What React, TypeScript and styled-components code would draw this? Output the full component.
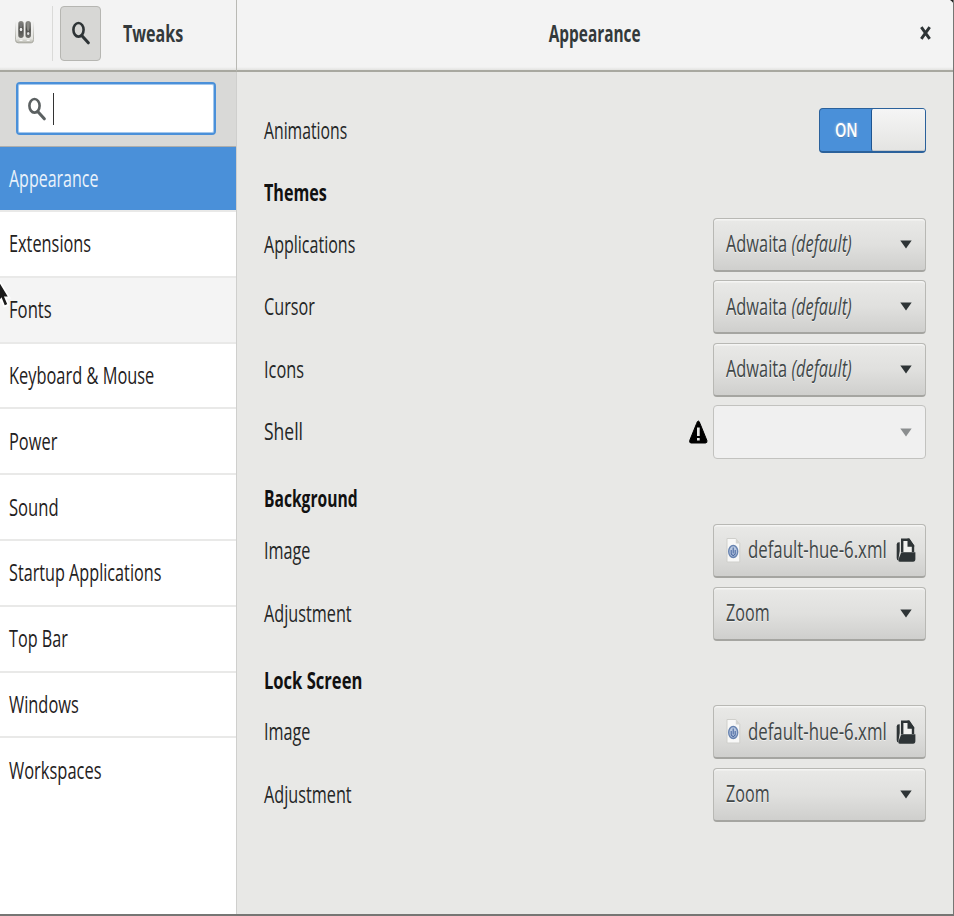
import React from 'react';
import styled, { createGlobalStyle, css } from 'styled-components';

const GlobalStyle = createGlobalStyle`
  html, body { margin: 0; padding: 0; background: #e8e8e6; }
  * { box-sizing: border-box; }
`;

const Window = styled.main`
  position: relative;
  display: grid;
  grid-template-columns: 237px 1fr;
  grid-template-rows: 72px 1fr;
  width: 954px;
  height: 916px;
  overflow: hidden;
  background: #e8e8e6;
  border-right: 1px solid #767674;
  border-bottom: 2px solid #767674;
  font-family: 'Open Sans', 'Noto Sans', sans-serif;
  font-size: 24px;
  line-height: 32px;
  color: #242626;
`;

const headerBar = css`
  display: flex;
  align-items: center;
  padding-bottom: 4px;
  background: linear-gradient(#f3f3f3 0, #f3f3f3 67px, #e2e2e0 70px);
  border-bottom: 2px solid #a8a8a0;
  color: #33393b;
`;

const SideHeader = styled.header`
  ${headerBar}
  border-right: 1px solid #b9b9b4;
`;

const MainHeader = styled.header`
  ${headerBar}
  display: grid;
  grid-template-columns: 60px 1fr 60px;
  justify-items: center;
`;

const CloseButton = styled.button`
  grid-column: 3;
  justify-self: end;
  display: flex;
  margin-right: 22px;
  padding: 0;
  border: 0;
  background: none;
`;

const Title = styled.h1<{ $scale: number; $centered?: boolean }>`
  grid-column: 2;
  margin: 0;
  font-size: 24px;
  font-weight: 700;
  white-space: nowrap;
  transform: translateY(-0.5px) scaleX(${p => p.$scale});
  transform-origin: ${p => (p.$centered ? 'center' : 'left')};
`;

const AppIcon = styled.div`
  display: flex;
  width: 53px;
  height: 55px;
  margin-right: 7px;
  padding: 13px 0 0 14px;
  border-right: 1px solid #dadad8;
`;

const SearchToggle = styled.button`
  display: flex;
  justify-content: center;
  align-items: center;
  width: 41px;
  height: 55px;
  margin-right: 22px;
  padding: 0;
  border: 1px solid #b6b6b2;
  border-radius: 4px;
  background: #d7d7d5;
`;

const Sidebar = styled.aside`
  display: flex;
  flex-direction: column;
  border-right: 1px solid #cfcfcd;
  background: #fff;
`;

const SearchBar = styled.div`
  height: 75px;
  padding: 10px 20px 0 16px;
  background: #d9d9d7;
  border-bottom: 1px solid #aeaeac;
`;

const SearchEntry = styled.div`
  display: flex;
  align-items: center;
  height: 53px;
  padding-left: 10px;
  border: 2px solid #4a90d9;
  border-radius: 4px;
  background: #fff;
  box-shadow: inset 0 0 0 1px #a3c7ec;
`;

const Caret = styled.span`
  width: 1px;
  height: 32px;
  margin-left: 7px;
  background: #333;
`;

const NavList = styled.nav`
  display: flex;
  flex-direction: column;
  margin-top: -1px;
  padding-top: 0.3px;
`;

const NavItem = styled.div<{ $state?: 'selected' | 'hover' }>`
  display: flex;
  align-items: center;
  height: 65.8px;
  padding-top: 1px;
  padding-left: 9px;
  border-bottom: 2px solid #e9e9e8;
  background: ${p => (p.$state === 'selected' ? '#4a90d9' : p.$state === 'hover' ? '#f4f4f4' : '#fff')};
  color: ${p => (p.$state === 'selected' ? '#e9f2fb' : '#1f2121')};

  &:first-child { border-top: 1px solid #aeaeac; }
  &:last-child { border-bottom-color: transparent; }
`;

const Label = styled.span<{ $scale: number }>`
  display: block;
  white-space: nowrap;
  transform: translateY(-1px) scaleX(${p => p.$scale});
  transform-origin: left;
`;

const Content = styled.section`
  display: flex;
  flex-direction: column;
  padding: 36.7px 27px 0 26.5px;
`;

const SettingRow = styled.div<{ $height?: number }>`
  display: flex;
  align-items: center;
  justify-content: space-between;
  height: ${p => p.$height ?? 54}px;

  & + & { margin-top: 8.6px; }
`;

const Heading = styled.h2<{ $scale: number }>`
  height: 64.5px;
  margin: 0;
  padding-top: 23px;
  font-size: 24px;
  font-weight: 700;
  line-height: 32px;
  color: #111;
  white-space: nowrap;
  transform: scaleX(${p => p.$scale});
  transform-origin: left;
`;

const Switch = styled.div`
  display: grid;
  grid-template-columns: 1fr 1fr;
  width: 107.5px;
  height: 45px;
  border: 1px solid #2b619b;
  border-bottom-width: 2px;
  border-radius: 4px;
  background: #4a90d9;
`;

const SwitchLabel = styled.span`
  align-self: center;
  justify-self: center;
  font-size: 19.5px;
  font-weight: 600;
  line-height: 24px;
  color: #fff;
  text-shadow: 0 0 3px rgba(255, 255, 255, 0.6), 0 1px 1px #2a63a0;
  transform: scaleX(0.74);
`;

const SwitchKnob = styled.span`
  margin-left: -1px;
  border-left: 1.5px solid #1f5590;
  border-radius: 2px;
  background: linear-gradient(#f5f5f5, #e4e4e2);
  box-shadow: inset 0 -1px 0 #c4c8cb;
`;

const ControlGroup = styled.div`
  display: flex;
  align-items: center;
  gap: 4px;
`;

const Control = styled.button<{ $disabled?: boolean }>`
  display: flex;
  align-items: center;
  justify-content: space-between;
  width: 213.5px;
  height: 54px;
  padding: 0 13px 0 12px;
  border: 1px solid ${p => (p.$disabled ? '#c2c2bf' : '#b8b8b4')};
  border-bottom: ${p => (p.$disabled ? '1px solid #c2c2bf' : '2px solid #a5a5a1')};
  border-radius: 4px;
  background: ${p => (p.$disabled ? '#f0f0f0' : 'linear-gradient(#e9e9e7, #e0e0de 50%, #cfcfcd)')};
  box-shadow: ${p => (p.$disabled ? 'none' : 'inset 0 1.5px 0 #f5f5f4')};
  color: ${p => (p.$disabled ? '#8b8e8f' : '#414748')};
  font: inherit;
  line-height: 32px;
  text-align: left;
  text-shadow: 0 1px 0 rgba(255, 255, 255, 0.6);
`;

const ControlLabel = styled(Label)`
  flex: 1;
  min-width: 0;
`;

const FileControl = styled(Control)`
  gap: 7px;
  padding-right: 9px;
`;

const Pointer = styled.div`
  position: absolute;
  left: 0;
  top: 277px;
`;

const Corner = styled.div`
  position: absolute;
  top: 0;
  right: -1px;
  display: flex;
`;

const SearchIcon = ({ color }: { color: string }) => (
  <svg width="18" height="24" viewBox="0 0 18 24" fill="none" stroke={color}>
    <ellipse cx="6.5" cy="8.800" rx="5.100" ry="6.800" strokeWidth="2.600" />
    <path d="M10.400 15.200 16.300 21.800" strokeWidth="3" strokeLinecap="round" />
  </svg>
);

const TweaksIcon = () => (
  <svg width="21" height="26" viewBox="0 0 21 26">
    <defs>
      <linearGradient id="plate" x2="0" y2="1">
        <stop offset="0" stopColor="#f3f3f3" />
        <stop offset=".8" stopColor="#e6e6e2" />
        <stop offset="1" stopColor="#b9b9b0" />
      </linearGradient>
      <linearGradient id="edge" gradientUnits="userSpaceOnUse" x1="0" y1="2" x2="0" y2="24">
        <stop offset="0" stopColor="#f3f3f3" />
        <stop offset="1" stopColor="#a3a39a" />
      </linearGradient>
      <linearGradient id="slot" x2="0" y2="1">
        <stop offset="0" stopColor="#8b8b87" />
        <stop offset=".5" stopColor="#4d4d4a" />
        <stop offset="1" stopColor="#70706c" />
      </linearGradient>
    </defs>
    <path d="M1.500 2V20.500Q1.500 23.800 4 23.800H17.300Q19.500 23.800 19.500 20.500V2" fill="url(#plate)" stroke="url(#edge)" />
    <rect x="4.300" y="2" width="5.400" height="17" rx="2.700" fill="url(#slot)" />
    <rect x="11.500" y="2" width="5.400" height="17" rx="2.700" fill="url(#slot)" />
    <ellipse cx="7" cy="10.500" rx="1.300" ry="1.800" fill="#eee" />
    <ellipse cx="7" cy="6" rx="1.200" ry="2.600" fill="#777" />
    <ellipse cx="14.200" cy="7.500" rx="1.300" ry="4.500" fill="#8a8a86" />
    <ellipse cx="14.200" cy="14.500" rx="1.200" ry="1.600" fill="#ddd" />
    <path d="M5.500 21.300H8.500M12.700 21.300H15.700" stroke="#fff" />
  </svg>
);

const CloseIcon = () => (
  <svg width="11" height="14" viewBox="0 0 11 14" fill="none" stroke="#2e3436" strokeWidth="2.900">
    <path d="M1.300 1.200 9.700 12.800M9.700 1.200 1.300 12.800" />
  </svg>
);

const Arrow = () => (
  <svg width="12" height="9" viewBox="0 0 12 9" fill="currentColor">
    <path d="M.3.500H11.700L6 8.500Z" />
  </svg>
);

const DropArrow = styled.span<{ $disabled?: boolean }>`
  display: flex;
  color: ${p => (p.$disabled ? '#8b8e8f' : '#2e3436')};
`;

const WarningIcon = () => (
  <svg width="21" height="26" viewBox="0 0 21 26">
    <path d="M10.300 2 Q11.300 2 12 4.500L18.900 21.500Q19.400 24 17.500 24H3.100Q1.200 24 1.700 21.500L8.600 4.500Q9.300 2 10.300 2Z" fill="#000" stroke="#000" strokeLinejoin="round" />
    <path d="M9 8.500H11.700V17H9ZM9 19H11.700V21.500H9Z" fill="#e8e8e6" />
  </svg>
);

const DocumentIcon = () => (
  <svg width="15" height="27" viewBox="0 0 15 27">
    <path d="M1 1.500H9.800L13.800 6.500V25H1Z" fill="#f8f8f7" stroke="#cfcfcb" />
    <path d="M9.800 1.500V6.500H13.800Z" fill="#d5d5d1" />
    <ellipse cx="7.200" cy="14.500" rx="4.500" ry="6" fill="#b9c8e0" stroke="#6783b0" strokeWidth="1.400" />
    <path d="M7.200 10.500V16.500M5.200 13V17L7.200 18.800L9.200 17V13" fill="none" stroke="#4c6ba3" strokeWidth="1.100" />
  </svg>
);

const OpenIcon = () => (
  <svg width="20" height="26" viewBox="0 0 20 26">
    <path d="M6.200 15V2.700H12.500L17 9V15" fill="#f1f1ef" stroke="#2e3436" strokeWidth="2.400" />
    <path d="M11.500 1.600H13.500L18.200 8.500V9.700H11.500Z" fill="#2e3436" />
    <path d="M.700 7.500Q.700 5.200 3 5.200H3.700V14L2.200 23.500Q.700 23 .700 21Z" fill="#2e3436" />
    <path d="M5.300 15.200H19.400V21.500Q19.400 24.700 17 24.700H3.800Q1.900 24.700 2.400 22.500Z" fill="#2e3436" />
  </svg>
);

const PointerIcon = () => (
  <svg width="12" height="34" viewBox="0 0 12 34">
    <path d="M-8 -8 9.400 20.500 5.300 20.500 8.300 27.500 4.300 29.500 1.300 22 -3 28Z" fill="#1b1b1b" stroke="#fff" strokeWidth="1.800" />
  </svg>
);

const navItems: { name: string; scale: number; state?: 'selected' | 'hover' }[] = [
  { name: 'Appearance', scale: 0.666, state: 'selected' },
  { name: 'Extensions', scale: 0.68 },
  { name: 'Fonts', scale: 0.695, state: 'hover' },
  { name: 'Keyboard & Mouse', scale: 0.683 },
  { name: 'Power', scale: 0.683 },
  { name: 'Sound', scale: 0.692 },
  { name: 'Startup Applications', scale: 0.675 },
  { name: 'Top Bar', scale: 0.675 },
  { name: 'Windows', scale: 0.684 },
  { name: 'Workspaces', scale: 0.686 },
];

const ThemeRow = ({ name, scale }: { name: string; scale: number }) => (
  <SettingRow>
    <Label $scale={scale}>{name}</Label>
    <Control>
      <ControlLabel $scale={0.682}>Adwaita <em>(default)</em></ControlLabel>
      <DropArrow><Arrow /></DropArrow>
    </Control>
  </SettingRow>
);

const PictureRows = () => (
  <>
    <SettingRow>
      <Label $scale={0.675}>Image</Label>
      <FileControl>
        <DocumentIcon />
        <ControlLabel $scale={0.7}>default-hue-6.xml</ControlLabel>
        <OpenIcon />
      </FileControl>
    </SettingRow>
    <SettingRow>
      <Label $scale={0.676}>Adjustment</Label>
      <Control>
        <ControlLabel $scale={0.672}>Zoom</ControlLabel>
        <DropArrow><Arrow /></DropArrow>
      </Control>
    </SettingRow>
  </>
);

export default function App() {
  return (
    <>
      <GlobalStyle />
      <Window>
        <SideHeader>
          <AppIcon><TweaksIcon /></AppIcon>
          <SearchToggle aria-label="Search"><SearchIcon color="#2e3436" /></SearchToggle>
          <Title $scale={0.67}>Tweaks</Title>
        </SideHeader>
        <MainHeader>
          <Title $scale={0.641} $centered>Appearance</Title>
          <CloseButton aria-label="Close"><CloseIcon /></CloseButton>
        </MainHeader>
        <Sidebar>
          <SearchBar>
            <SearchEntry>
              <SearchIcon color="#5b6061" />
              <Caret />
            </SearchEntry>
          </SearchBar>
          <NavList>
            {navItems.map(item => (
              <NavItem key={item.name} $state={item.state}>
                <Label $scale={item.scale}>{item.name}</Label>
              </NavItem>
            ))}
          </NavList>
        </Sidebar>
        <Content>
          <SettingRow $height={44.5}>
            <Label $scale={0.657}>Animations</Label>
            <Switch>
              <SwitchLabel>ON</SwitchLabel>
              <SwitchKnob />
            </Switch>
          </SettingRow>
          <Heading $scale={0.672}>Themes</Heading>
          <ThemeRow name="Applications" scale={0.668} />
          <ThemeRow name="Cursor" scale={0.675} />
          <ThemeRow name="Icons" scale={0.68} />
          <SettingRow>
            <Label $scale={0.73}>Shell</Label>
            <ControlGroup>
              <WarningIcon />
              <Control $disabled>
                <ControlLabel $scale={1} />
                <DropArrow $disabled><Arrow /></DropArrow>
              </Control>
            </ControlGroup>
          </SettingRow>
          <Heading $scale={0.65}>Background</Heading>
          <PictureRows />
          <Heading $scale={0.69}>Lock Screen</Heading>
          <PictureRows />
        </Content>
        <Pointer><PointerIcon /></Pointer>
        <Corner>
          <svg width="4" height="5" viewBox="0 0 4 5"><path d="M0 0H4V5Q3 1.500 0 0Z" fill="#222" /></svg>
        </Corner>
      </Window>
    </>
  );
}
